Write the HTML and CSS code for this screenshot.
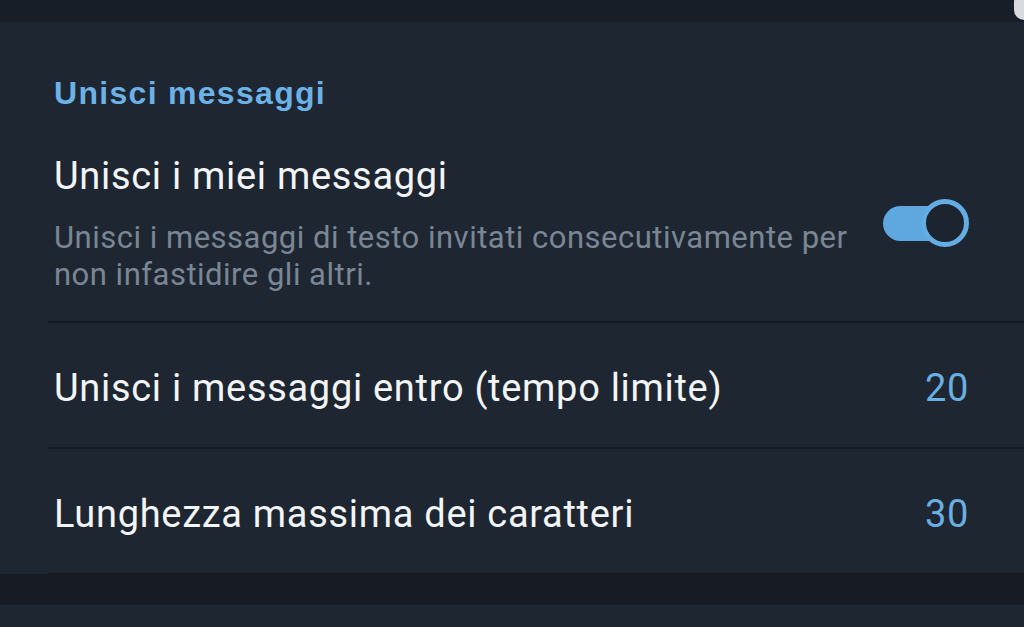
FILE: index.html
```html
<!DOCTYPE html>
<html lang="it">
<head>
<meta charset="utf-8">
<link rel="stylesheet" href="styles.css">
</head>
<body>
<div class="topbar"><span class="corner"></span></div>
<section class="panel">
  <h2 class="section-title">Unisci messaggi</h2>
  <div class="row row-toggle">
    <div class="row-text">
      <div class="row-label">Unisci i miei messaggi</div>
      <div class="row-desc">Unisci i messaggi di testo invitati consecutivamente per non infastidire gli altri.</div>
    </div>
    <div class="toggle on"><span class="knob"></span></div>
  </div>
  <div class="row row-value">
    <div class="row-label">Unisci i messaggi entro (tempo limite)</div>
    <div class="value">20</div>
  </div>
  <div class="row row-value">
    <div class="row-label">Lunghezza massima dei caratteri</div>
    <div class="value">30</div>
  </div>
</section>
<div class="gap"></div>
<div class="panel-next"></div>
</body>
</html>
```
FILE: styles.css
```css
html, body {
  margin: 0;
  padding: 0;
  background: #1e2632;
  width: 1024px;
  height: 627px;
  overflow: hidden;
  font-family: Roboto, "Noto Sans", sans-serif;
}
.topbar {
  height: 22px;
  background: #181e27;
  position: relative;
}
.corner {
  position: absolute;
  right: -14px;
  top: -8px;
  width: 24px;
  height: 28px;
  border-radius: 10px;
  background: #d8dadd;
}
.panel {
  background: #1e2632;
  height: 552px;
  padding-top: 53px;
  box-sizing: border-box;
}
.section-title {
  margin: 0 0 0 54px;
  font-family: "Liberation Sans", Arial, sans-serif;
  font-weight: bold;
  font-size: 32px;
  line-height: 36px;
  letter-spacing: 1.3px;
  color: #6cb2e7;
}
.row {
  display: flex;
  align-items: center;
  margin-left: 48px;
  padding-left: 6px;
  padding-right: 55px;
  border-bottom: 2px solid #151b23;
}
.row-toggle {
  padding-top: 43px;
  padding-bottom: 28px;
}
.row-text {
  flex: 1;
}
.row-label {
  flex: 1;
  color: #f2f4f6;
  font-size: 38px;
  line-height: 44px;
  letter-spacing: 0.7px;
}
.row-desc {
  margin-top: 21px;
  color: #7b8694;
  font-size: 31px;
  line-height: 37px;
  letter-spacing: 0.5px;
  max-width: 805px;
}
.row-value {
  height: 126px;
  padding-top: 6px;
  box-sizing: border-box;
}
.value {
  color: #6aafe2;
  font-size: 38px;
  letter-spacing: 0.7px;
}
.toggle {
  position: relative;
  width: 86px;
  height: 50px;
  margin-left: 20px;
  margin-top: -2px;
}
.toggle::before {
  content: "";
  position: absolute;
  left: 0;
  top: 8px;
  width: 70px;
  height: 35px;
  border-radius: 18px;
  background: #5ea7df;
}
.knob {
  position: absolute;
  right: 0;
  top: 1px;
  width: 38px;
  height: 38px;
  border: 5px solid #64ade4;
  border-radius: 50%;
  background: #1c2430;
}
.gap {
  height: 31px;
  background: #171c24;
}
.panel-next {
  height: 22px;
  background: #1e2632;
}
```
